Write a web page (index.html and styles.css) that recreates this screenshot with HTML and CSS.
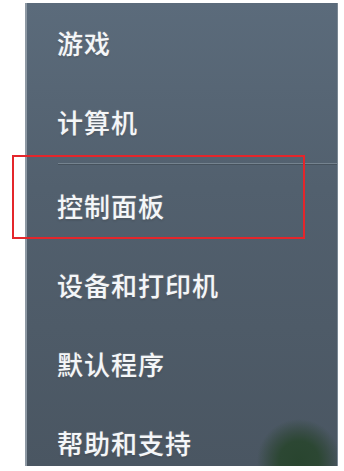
FILE: index.html
```html
<!DOCTYPE html>
<html lang="zh-CN">
<head>
<meta charset="UTF-8">
<title>开始菜单</title>
<link rel="stylesheet" href="styles.css">
</head>
<body>
<div class="shot">
  <div class="menu">
    <div class="item">游戏</div>
    <div class="item">计算机</div>
    <div class="sep"></div>
    <div class="item">控制面板</div>
    <div class="item">设备和打印机</div>
    <div class="item">默认程序</div>
    <div class="item">帮助和支持</div>
  </div>
  <div class="mark"></div>
</div>
</body>
</html>
```

FILE: styles.css
```css
* {
  margin: 0;
  padding: 0;
  box-sizing: border-box;
}

body {
  background: #fff;
  font-family: "Noto Sans CJK SC", "Noto Sans", sans-serif;
}

.shot {
  position: relative;
  width: 344px;
  height: 471px;
  padding: 3px 6px 5px 25px;
}

.menu {
  height: 463px;
  overflow: hidden;
  border-left: 2px solid #8d98a3;
  border-right: 1px solid #7b8894;
  background:
    radial-gradient(circle at 272px 458px, #29452f 0, #2c4733 20px, rgba(50, 72, 60, 0.7) 30px, rgba(74, 85, 97, 0) 42px),
    linear-gradient(180deg, #5b6b7b 0%, #52606e 40%, #4a5662 100%);
  display: flex;
  flex-direction: column;
}

.item {
  flex: none;
  height: 79px;
  display: flex;
  align-items: center;
  padding-left: 30px;
  font-size: 26px;
  line-height: 1;
  letter-spacing: 1px;
  font-weight: 500;
  color: #f4f6f8;
  text-shadow: 0 0 2px rgba(255, 255, 255, 0.35), 0 1px 2px rgba(0, 0, 0, 0.35);
}

.sep {
  flex: none;
  height: 1px;
  margin: 2px 0 2px 31px;
  background: #75838f;
  box-shadow: 0 1px 0 #46525d;
}

/* red annotation box over the menu */
.mark {
  position: absolute;
  left: 12px;
  top: 155px;
  width: 293px;
  height: 84px;
  border: 2px solid #e4262b;
}
```
